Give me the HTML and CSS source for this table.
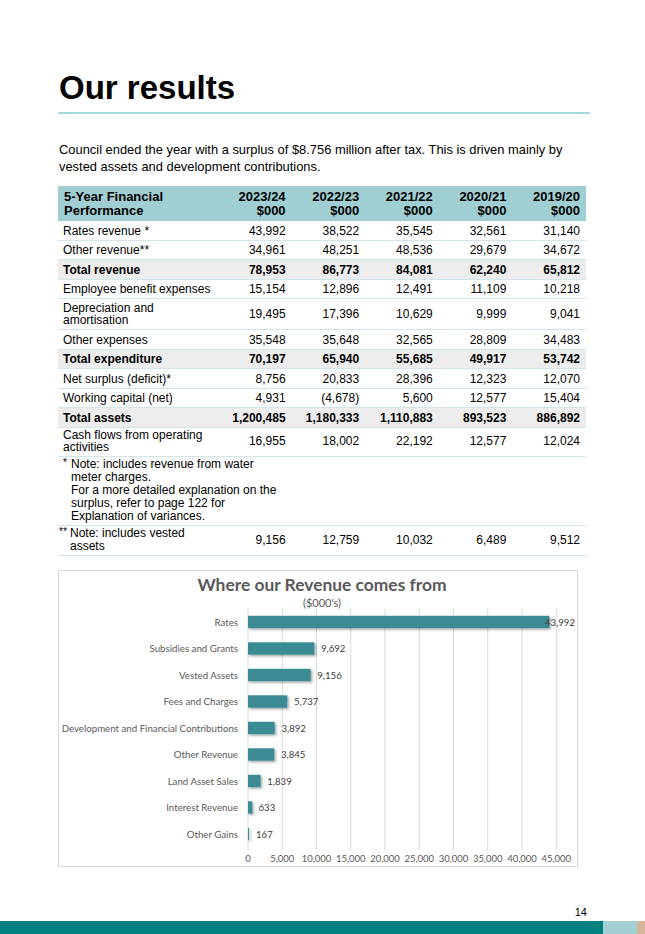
FILE: index.html
```html
<!DOCTYPE html>
<html lang="en">
<head>
<meta charset="utf-8">
<title>Our results</title>
<link rel="stylesheet" href="styles.css">
</head>
<body>
<div class="page">
  <h1 class="title">Our results</h1>
  <p class="intro">Council ended the year with a surplus of $8.756 million after tax. This is driven mainly by vested assets and development contributions.</p>

  <table class="fin">
    <colgroup>
      <col class="c-label"><col class="c-num"><col class="c-num"><col class="c-num"><col class="c-num"><col class="c-num">
    </colgroup>
    <thead>
      <tr>
        <th class="lbl">5-Year Financial Performance</th>
        <th>2023/24<br>$000</th>
        <th>2022/23<br>$000</th>
        <th>2021/22<br>$000</th>
        <th>2020/21<br>$000</th>
        <th>2019/20<br>$000</th>
      </tr>
    </thead>
    <tbody>
      <tr><td class="lbl">Rates revenue *</td><td>43,992</td><td>38,522</td><td>35,545</td><td>32,561</td><td>31,140</td></tr>
      <tr><td class="lbl">Other revenue**</td><td>34,961</td><td>48,251</td><td>48,536</td><td>29,679</td><td>34,672</td></tr>
      <tr class="total"><td class="lbl">Total revenue</td><td>78,953</td><td>86,773</td><td>84,081</td><td>62,240</td><td>65,812</td></tr>
      <tr><td class="lbl">Employee benefit expenses</td><td>15,154</td><td>12,896</td><td>12,491</td><td>11,109</td><td>10,218</td></tr>
      <tr class="two"><td class="lbl">Depreciation and amortisation</td><td>19,495</td><td>17,396</td><td>10,629</td><td>9,999</td><td>9,041</td></tr>
      <tr><td class="lbl">Other expenses</td><td>35,548</td><td>35,648</td><td>32,565</td><td>28,809</td><td>34,483</td></tr>
      <tr class="total"><td class="lbl">Total expenditure</td><td>70,197</td><td>65,940</td><td>55,685</td><td>49,917</td><td>53,742</td></tr>
      <tr><td class="lbl">Net surplus (deficit)*</td><td>8,756</td><td>20,833</td><td>28,396</td><td>12,323</td><td>12,070</td></tr>
      <tr><td class="lbl">Working capital (net)</td><td>4,931</td><td>(4,678)</td><td>5,600</td><td>12,577</td><td>15,404</td></tr>
      <tr class="total"><td class="lbl">Total assets</td><td>1,200,485</td><td>1,180,333</td><td>1,110,883</td><td>893,523</td><td>886,892</td></tr>
      <tr class="two cash"><td class="lbl">Cash flows from operating activities</td><td>16,955</td><td>18,002</td><td>22,192</td><td>12,577</td><td>12,024</td></tr>
      <tr class="note"><td class="lbl" colspan="6"><div class="note-text"><span class="mark">*</span>Note: includes revenue from water meter charges.<br>For a more detailed explanation on the surplus, refer to page 122 for Explanation of variances.</div></td></tr>
      <tr class="two note2"><td class="lbl"><div class="note-text2"><span class="mark2">**</span>Note: includes vested assets</div></td><td>9,156</td><td>12,759</td><td>10,032</td><td>6,489</td><td>9,512</td></tr>
    </tbody>
  </table>

  <div class="chart">
    <svg class="chart-svg" width="520" height="297" viewBox="0 0 520 297">
      <defs>
        <filter id="sh" x="-10%" y="-30%" width="130%" height="180%">
          <feDropShadow dx="1.5" dy="1.5" stdDeviation="1" flood-color="#000" flood-opacity="0.35"/>
        </filter>
      </defs>
      <text class="ch-title" x="264" y="21" text-anchor="middle">Where our Revenue comes from</text>
      <text class="ch-sub" x="264" y="36.5" text-anchor="middle">($000's)</text>
      <g class="grid">
        <line x1="190" y1="39" x2="190" y2="280"/>
        <line x1="224.25" y1="39" x2="224.25" y2="280"/>
        <line x1="258.5" y1="39" x2="258.5" y2="280"/>
        <line x1="292.75" y1="39" x2="292.75" y2="280"/>
        <line x1="327" y1="39" x2="327" y2="280"/>
        <line x1="361.25" y1="39" x2="361.25" y2="280"/>
        <line x1="395.5" y1="39" x2="395.5" y2="280"/>
        <line x1="429.75" y1="39" x2="429.75" y2="280"/>
        <line x1="464" y1="39" x2="464" y2="280"/>
        <line x1="498.25" y1="39" x2="498.25" y2="280"/>
      </g>
      <g class="bars" filter="url(#sh)">
        <rect x="190" y="45.8" width="301.3" height="12.4"/>
        <rect x="190" y="72.3" width="66.4" height="12.4"/>
        <rect x="190" y="98.8" width="62.7" height="12.4"/>
        <rect x="190" y="125.3" width="39.3" height="12.4"/>
        <rect x="190" y="151.8" width="26.7" height="12.4"/>
        <rect x="190" y="178.3" width="26.3" height="12.4"/>
        <rect x="190" y="204.8" width="12.6" height="12.4"/>
        <rect x="190" y="231.3" width="4.3" height="12.4"/>
        <rect x="190" y="257.8" width="1.1" height="12.4"/>
      </g>
      <g class="cats" text-anchor="end">
        <text x="180" y="55.5">Rates</text>
        <text x="180" y="82">Subsidies and Grants</text>
        <text x="180" y="108.5">Vested Assets</text>
        <text x="180" y="135">Fees and Charges</text>
        <text x="180" y="161.5">Development and Financial Contributions</text>
        <text x="180" y="188">Other Revenue</text>
        <text x="180" y="214.5">Land Asset Sales</text>
        <text x="180" y="241">Interest Revenue</text>
        <text x="180" y="267.5">Other Gains</text>
      </g>
      <g class="vals">
        <text x="487" y="55.5">43,992</text>
        <text x="263" y="82">9,692</text>
        <text x="259.3" y="108.5">9,156</text>
        <text x="236" y="135">5,737</text>
        <text x="223.5" y="161.5">3,892</text>
        <text x="223" y="188">3,845</text>
        <text x="209.3" y="214.5">1,839</text>
        <text x="200.5" y="241">633</text>
        <text x="198" y="267.5">167</text>
      </g>
      <g class="axis" text-anchor="middle">
        <text x="190" y="292">0</text>
        <text x="224.25" y="292">5,000</text>
        <text x="258.5" y="292">10,000</text>
        <text x="292.75" y="292">15,000</text>
        <text x="327" y="292">20,000</text>
        <text x="361.25" y="292">25,000</text>
        <text x="395.5" y="292">30,000</text>
        <text x="429.75" y="292">35,000</text>
        <text x="464" y="292">40,000</text>
        <text x="498.25" y="292">45,000</text>
      </g>
    </svg>
  </div>
</div>

<footer class="footer">
  <div class="pageno">14</div>
  <div class="strip">
    <span class="s1"></span><span class="s2"></span><span class="s3"></span>
  </div>
</footer>
</body>
</html>
```

FILE: styles.css
```css
html, body {
  margin: 0;
  padding: 0;
  background: #ffffff;
}

body {
  width: 645px;
  height: 934px;
  position: relative;
  overflow: hidden;
  font-family: "Liberation Sans", Arial, sans-serif;
  color: #000;
}

.page {
  padding: 68px 0 0 58px;
  width: 532px;
}

.title {
  margin: 0;
  font-size: 33px;
  line-height: 40px;
  font-weight: bold;
  padding: 0 0 4px 1px;
  border-bottom: 2px solid #a8d6d9;
}

.intro {
  margin: 27px 0 11px 1px;
  font-size: 12.9px;
  line-height: 17px;
  width: 525px;
}

.fin {
  border-collapse: collapse;
  width: 528px;
  table-layout: fixed;
  font-size: 12px;
}

.c-label { width: 160px; }
.c-num { width: 73.6px; }

.fin th {
  background: #9fcfd2;
  font-weight: bold;
  font-size: 13px;
  line-height: 14px;
  padding: 4px 6px 3px 0;
  text-align: right;
  vertical-align: top;
}

.fin th.lbl {
  text-align: left;
  padding-left: 6px;
}

.fin td {
  line-height: 12px;
  padding: 3.5px 6px 3px 0;
  text-align: right;
  vertical-align: middle;
  border-bottom: 1.5px solid #cfe7e9;
}

.fin td.lbl {
  text-align: left;
  padding-left: 5px;
  padding-right: 3px;
}

.fin tr.total td {
  background: #ededed;
  font-weight: bold;
  padding-top: 3.5px;
  padding-bottom: 3px;
}

.fin tr.two td {
  padding-top: 3px;
  padding-bottom: 3px;
}

.fin tr.cash td {
  padding-top: 1.5px;
  padding-bottom: 2.5px;
}

.fin tr.note td {
  padding-top: 1px;
  padding-bottom: 2px;
  line-height: 13px;
}

.fin tr.note2 td {
  padding-top: 1px;
  padding-bottom: 2px;
}

.fin tr.note2 td.lbl {
  line-height: 13px;
}

.note-text {
  width: 212px;
  padding-left: 8px;
  text-indent: -8px;
}

.note-text2 {
  padding-left: 7px;
  text-indent: -11px;
}

.mark {
  display: inline-block;
  width: 8px;
  text-indent: 0;
  vertical-align: top;
  font-size: 10px;
  line-height: 10px;
}

.mark2 {
  display: inline-block;
  width: 11px;
  text-indent: 0;
  vertical-align: top;
  font-size: 10px;
  line-height: 10px;
}

.chart {
  margin-top: 14px;
  width: 518px;
  height: 295px;
  border: 1px solid #d9d9d9;
}

.chart-svg {
  display: block;
  margin: -1px 0 0 -1px;
  font-family: Lato, "Open Sans", sans-serif;
}

.ch-title {
  font-size: 17.4px;
  font-weight: bold;
  fill: #595959;
}

.ch-sub {
  font-size: 11px;
  fill: #595959;
}

.grid line {
  stroke: #d9d9d9;
  stroke-width: 1;
}

.bars rect {
  fill: #3a8b94;
}

.cats text {
  font-size: 9.7px;
  fill: #595959;
}

.vals text {
  font-size: 9.6px;
  fill: #404040;
}

.axis text {
  font-size: 9.5px;
  fill: #595959;
}

.footer {
  position: absolute;
  left: 0;
  bottom: 0;
  width: 645px;
}

.pageno {
  text-align: right;
  padding-right: 58px;
  font-size: 11px;
  line-height: 13px;
  margin-bottom: 2px;
}

.strip {
  display: flex;
  height: 13px;
}

.s1 { width: 603px; background: #00807e; }
.s2 { width: 34px; background: #a3cfd3; }
.s3 { flex: 1; background: #d6b59a; }
```
